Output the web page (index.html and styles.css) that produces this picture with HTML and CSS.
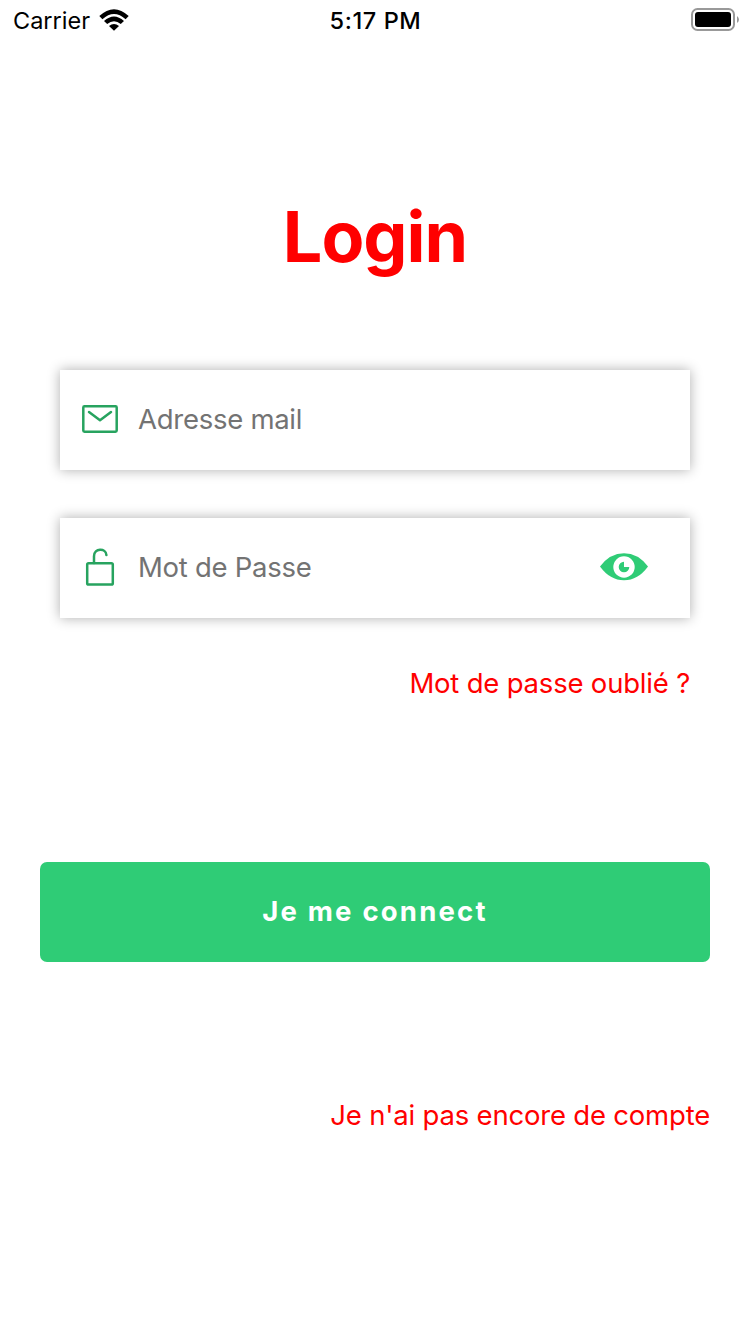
FILE: index.html
```html
<!DOCTYPE html>
<html lang="fr">
<head>
<meta charset="utf-8">
<title>Login</title>
<link rel="stylesheet" href="styles.css">
</head>
<body>
<div class="screen">
  <header class="status">
    <div class="status-left">
      <span class="carrier">Carrier</span>
      <svg class="wifi" width="30" height="22" viewBox="0 0 30 22">
        <path d="M0.3 7.1Q15-6.7 29.7 7.1L26.6 10.2Q15-.2 3.4 10.2Z"/>
        <path d="M5 12Q15 3 25 12L21.8 15.1Q15 9.2 8.2 15.1Z"/>
        <path d="M10 17Q15 12.8 20 17L15 21.8Z"/>
      </svg>
    </div>
    <span class="clock">5:17 PM</span>
    <svg class="battery" width="48" height="24" viewBox="0 0 48 24">
      <rect x="1" y="1" width="42" height="21" rx="5.5" fill="none" stroke="#999" stroke-width="2"/>
      <rect x="4" y="4" width="36" height="15" rx="3"/>
      <path d="M46 8Q48 9.5 48 11.5T46 15Z" fill="#999"/>
    </svg>
  </header>
  <main class="content">
    <h1 class="title">Login</h1>
    <form class="form">
      <div class="field">
        <svg class="field-icon" width="40" height="40" viewBox="0 0 40 40">
          <rect x="3.3" y="6.3" width="33.4" height="25.4" rx="1.2"/>
          <path d="M9 12L20 20.2L31 12"/>
        </svg>
        <span class="placeholder mail">Adresse mail</span>
      </div>
      <div class="field">
        <svg class="field-icon" width="40" height="40" viewBox="0 0 40 40">
          <rect x="7.2" y="15.2" width="25.6" height="21.4" rx="1.4"/>
          <path d="M14 15V8.3C14 -.2 26 -.2 26.4 7"/>
        </svg>
        <span class="placeholder pass">Mot de Passe</span>
        <svg class="eye" width="48" height="28" viewBox="0 0 48 28">
          <path d="M0 13.5Q10 .3 24 .3T48 13.5Q38 27.3 24 27.3T0 13.5Z" fill="#2fcc76"/>
          <circle cx="24" cy="14" r="10.7" fill="#fff"/>
          <path d="M24 8.7V14H29.3A5.3 5.3 0 1 1 24 8.7Z" fill="#2fcc76"/>
        </svg>
      </div>
      <a class="link forgot">Mot de passe oublié ?</a>
    </form>
    <button class="submit" type="button">Je me connect</button>
    <a class="link signup">Je n'ai pas encore de compte</a>
  </main>
</div>
</body>
</html>
```
FILE: styles.css
```css
* { box-sizing: border-box; }
body { margin: 0; background: #fff; font-family: Inter, "Liberation Sans", sans-serif; }
.screen { width: 750px; height: 1334px; overflow: hidden; }
.status { display: grid; grid-template-columns: 1fr auto 1fr; align-items: center; height: 40px; padding: 0 11px 0 13px; font-size: 23.5px; line-height: 38px; color: #000; }
.status-left { display: flex; align-items: center; gap: 9px; }
.carrier { padding-top: 2px; }
.clock { padding-top: 2px; font-weight: 550; font-size: 23.5px; letter-spacing: .6px; margin-left: -1px; }
.battery { justify-self: end; }
.content { display: flex; flex-direction: column; padding: 0 40px; }
.title { margin: 154px 0 0; text-align: center; color: #f00; font-size: 70px; font-weight: 700; line-height: 86px; letter-spacing: -1px; }
.form { display: flex; flex-direction: column; gap: 48px; margin-top: 90px; padding: 0 20px; }
.field { display: flex; align-items: center; height: 100px; padding: 0 42px 0 20px; background: #fff; box-shadow: 0 0 12px rgba(0, 0, 0, .32); }
.field-icon { fill: none; stroke: #27a35f; stroke-width: 2.5; stroke-linejoin: round; stroke-linecap: round; }
.placeholder { flex: 1; margin-left: 18px; padding-bottom: 2px; color: #737373; font-size: 27.5px; line-height: 34px; letter-spacing: -.27px; }
.eye { margin-bottom: 2px; }
.link { align-self: flex-end; color: #f00; font-size: 27.5px; line-height: 34px; letter-spacing: -.2px; white-space: nowrap; }
.submit { height: 100px; margin: 162px 0 0; padding: 0 0 2px; border: 0; border-radius: 7px; background: #2fcc76; color: #fff; font: 700 27.5px Inter, "Liberation Sans", sans-serif; letter-spacing: 2.2px; }
.signup { margin-top: 136px; }
```
